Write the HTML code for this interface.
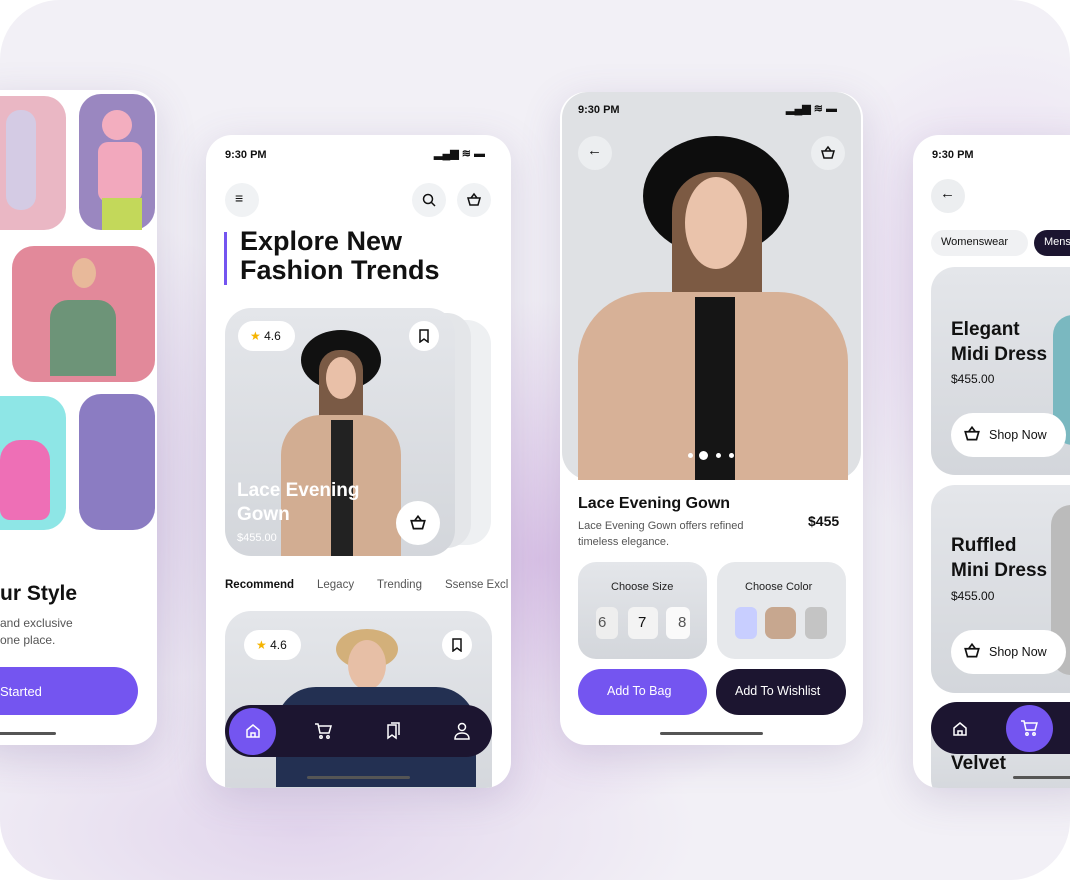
<!DOCTYPE html>
<html><head><meta charset="utf-8"><style>
*{margin:0;padding:0;box-sizing:border-box}
body{width:1070px;height:880px;background:#fff;font-family:"Liberation Sans",sans-serif;position:relative;overflow:hidden;color:#111}
.bg{position:absolute;left:0;top:0;width:1070px;height:880px;border-radius:60px;background:
radial-gradient(ellipse 300px 260px at 540px 560px,rgba(200,160,220,.55),transparent),
radial-gradient(ellipse 260px 300px at 60px 500px,rgba(190,160,215,.5),transparent),
radial-gradient(ellipse 220px 260px at 1000px 300px,rgba(220,190,235,.5),transparent),
radial-gradient(ellipse 400px 160px at 300px 830px,rgba(215,195,230,.6),transparent),
#f2f0f6;overflow:hidden}
.ph{position:absolute;background:#fff;border-radius:26px;overflow:hidden;box-shadow:0 10px 40px rgba(100,80,140,.18)}
.abs{position:absolute}
.t{position:absolute;white-space:nowrap}
.circ{position:absolute;width:34px;height:34px;border-radius:50%;background:#f0f2f4}
.gray{background:linear-gradient(180deg,#e4e6ea,#d3d6db)}
.dark{background:#1c1530}
.pur{background:#7455f0}
</style></head><body>
<div class="bg">
<!-- Phone A -->
<div class="ph" style="left:-30px;top:90px;width:187px;height:655px">
 <div class="abs" style="left:0;top:6px;width:96px;height:134px;border-radius:22px;background:#eab7c4"></div>
 <div class="abs" style="left:109px;top:4px;width:76px;height:136px;border-radius:22px;background:#9a87c0"></div>
 <div class="abs" style="left:132px;top:20px;width:30px;height:30px;border-radius:50%;background:#f3aebf"></div>
 <div class="abs" style="left:128px;top:52px;width:44px;height:60px;border-radius:10px;background:#f2a8bd"></div>
 <div class="abs" style="left:132px;top:108px;width:40px;height:32px;background:#c3d85a"></div>
 <div class="abs" style="left:36px;top:20px;width:30px;height:100px;border-radius:14px;background:#d4cbe4"></div>
 <div class="abs" style="left:42px;top:156px;width:143px;height:136px;border-radius:22px;background:#e2899a"></div>
 <div class="abs" style="left:80px;top:210px;width:66px;height:76px;border-radius:18px 18px 0 0;background:#6d9478"></div>
 <div class="abs" style="left:102px;top:168px;width:24px;height:30px;border-radius:50%;background:#e8b99a"></div>
 <div class="abs" style="left:0;top:306px;width:96px;height:134px;border-radius:22px;background:#8ee6e6"></div>
 <div class="abs" style="left:30px;top:350px;width:50px;height:80px;border-radius:20px 20px 10px 10px;background:#ee6fb6"></div>
 <div class="abs" style="left:109px;top:304px;width:76px;height:136px;border-radius:22px;background:#8b7cc2"></div>
 <div class="t" style="left:30px;top:492px;font-size:21px;font-weight:bold">ur Style</div>
 <div class="t" style="left:30px;top:525px;font-size:12px;color:#555;line-height:17px">and exclusive<br>one place.</div>
 <div class="abs pur" style="left:0;top:577px;width:168px;height:48px;border-radius:24px"></div>
 <div class="t" style="left:30px;top:594px;font-size:13px;color:#fff">Started</div>
 <div class="abs" style="left:20px;top:642px;width:66px;height:3px;background:#555;border-radius:2px"></div>
</div>
<!-- Phone B -->
<div class="ph" style="left:206px;top:135px;width:305px;height:653px">
 <div class="t" style="left:19px;top:14px;font-size:11px;font-weight:bold">9:30 PM</div>
 <div class="t" style="left:228px;top:12px;font-size:11px;font-weight:bold">▂▄▆ ≋ ▬</div>
 <div class="circ" style="left:19px;top:48px"></div><div class="t" style="left:29px;top:55px;font-size:14px">≡</div>
 <div class="circ" style="left:206px;top:48px"></div>
 <svg class="abs" style="left:215px;top:57px" width="16" height="16" viewBox="0 0 16 16" fill="none" stroke="#111" stroke-width="1.5"><circle cx="7" cy="7" r="4.5"/><path d="M10.5 10.5l3.5 3.5"/></svg>
 <div class="circ" style="left:251px;top:48px"></div>
 <svg class="abs" style="left:260px;top:57px" width="16" height="16" viewBox="0 0 16 16" fill="none" stroke="#111" stroke-width="1.5"><path d="M2 6h12l-2 7H4z M5 6l3-4 3 4"/></svg>
 <div class="abs" style="left:18px;top:97px;width:3px;height:53px;background:#7455f0"></div>
 <div class="t" style="left:34px;top:92px;font-size:27px;font-weight:bold;line-height:29px">Explore New<br>Fashion Trends</div>
 <div class="abs" style="left:150px;top:185px;width:135px;height:225px;border-radius:24px;background:#eef0f2"></div>
 <div class="abs" style="left:120px;top:178px;width:145px;height:235px;border-radius:24px;background:#e4e6e9"></div>
 <div class="abs gray" style="left:19px;top:173px;width:230px;height:248px;border-radius:26px"></div>
 <div class="abs" style="left:95px;top:195px;width:80px;height:60px;border-radius:50%;background:#111"></div>
 <div class="abs" style="left:113px;top:215px;width:44px;height:90px;border-radius:20px;background:#7a5a45"></div>
 <div class="abs" style="left:120px;top:222px;width:30px;height:42px;border-radius:50%;background:#e9c0a8"></div>
 <div class="abs" style="left:75px;top:280px;width:120px;height:141px;border-radius:40px 40px 0 0;background:#d2ad92"></div>
 <div class="abs" style="left:125px;top:285px;width:22px;height:136px;background:#222"></div>
 <div class="abs" style="left:32px;top:186px;width:57px;height:30px;border-radius:15px;background:#fff"></div>
 <div class="t" style="left:44px;top:194px;font-size:12px"><span style="color:#f5b400">★</span> 4.6</div>
 <div class="abs" style="left:203px;top:186px;width:30px;height:30px;border-radius:50%;background:#fff"></div>
 <svg class="abs" style="left:212px;top:194px" width="12" height="14" viewBox="0 0 12 14" fill="none" stroke="#111" stroke-width="1.5"><path d="M2 1h8v12l-4-3-4 3z"/></svg>
 <div class="t" style="left:31px;top:344px;font-size:19px;font-weight:bold;color:#fff;line-height:24px">Lace Evening<br>Gown</div>
 <div class="t" style="left:31px;top:397px;font-size:11px;color:#fff">$455.00</div>
 <div class="abs" style="left:190px;top:366px;width:44px;height:44px;border-radius:50%;background:#fff"></div>
 <svg class="abs" style="left:203px;top:379px" width="18" height="18" viewBox="0 0 16 16" fill="none" stroke="#111" stroke-width="1.5"><path d="M2 6h12l-2 7H4z M5 6l3-4 3 4"/></svg>
 <div class="t" style="left:19px;top:444px;font-size:11.5px;font-weight:bold">Recommend</div>
 <div class="t" style="left:111px;top:444px;font-size:11.5px;color:#555">Legacy</div>
 <div class="t" style="left:171px;top:444px;font-size:11.5px;color:#555">Trending</div>
 <div class="t" style="left:239px;top:444px;font-size:11.5px;color:#555">Ssense Excl</div>
 <div class="abs gray" style="left:19px;top:476px;width:267px;height:200px;border-radius:26px"></div>
 <div class="abs" style="left:130px;top:494px;width:62px;height:40px;border-radius:50%;background:#d3b07a"></div>
 <div class="abs" style="left:142px;top:505px;width:38px;height:50px;border-radius:50%;background:#e7bfa6"></div>
 <div class="abs" style="left:70px;top:552px;width:200px;height:100px;border-radius:40px 40px 0 0;background:#233052"></div>
 <div class="abs" style="left:38px;top:495px;width:57px;height:30px;border-radius:15px;background:#fff"></div>
 <div class="t" style="left:50px;top:503px;font-size:12px"><span style="color:#f5b400">★</span> 4.6</div>
 <div class="abs" style="left:236px;top:495px;width:30px;height:30px;border-radius:50%;background:#fff"></div>
 <svg class="abs" style="left:245px;top:503px" width="12" height="14" viewBox="0 0 12 14" fill="none" stroke="#111" stroke-width="1.5"><path d="M2 1h8v12l-4-3-4 3z"/></svg>
 <div class="abs dark" style="left:19px;top:570px;width:267px;height:52px;border-radius:26px"></div>
 <div class="abs pur" style="left:23px;top:573px;width:47px;height:47px;border-radius:50%"></div>
 <svg class="abs" style="left:39px;top:588px" width="16" height="16" viewBox="0 0 16 16" fill="none" stroke="#fff" stroke-width="1.5"><path d="M2 7l6-5 6 5v7H2z M6 14v-4h4v4"/></svg>
 <svg class="abs" style="left:108px;top:587px" width="18" height="18" viewBox="0 0 18 18" fill="none" stroke="#fff" stroke-width="1.5"><path d="M1 2h3l2 9h9l2-7H5"/><circle cx="7" cy="15" r="1.2"/><circle cx="14" cy="15" r="1.2"/></svg>
 <svg class="abs" style="left:179px;top:587px" width="16" height="18" viewBox="0 0 16 18" fill="none" stroke="#fff" stroke-width="1.5"><path d="M3 3h8v13l-4-3-4 3z M6 1h8v12"/></svg>
 <svg class="abs" style="left:248px;top:587px" width="16" height="18" viewBox="0 0 16 18" fill="none" stroke="#fff" stroke-width="1.5"><circle cx="8" cy="5" r="3.5"/><path d="M1 17c0-4 3-6 7-6s7 2 7 6z"/></svg>
 <div class="abs" style="left:101px;top:641px;width:103px;height:3px;background:#555;border-radius:2px"></div>
</div>
<!-- Phone C -->
<div class="ph" style="left:560px;top:92px;width:303px;height:653px">
 <div class="abs gray" style="left:2px;top:0;width:299px;height:388px;border-radius:26px 26px 28px 28px;background:#dfe1e4"></div>
 <div class="abs" style="left:83px;top:44px;width:146px;height:120px;border-radius:50%;background:#0d0d0d"></div>
 <div class="abs" style="left:112px;top:80px;width:90px;height:200px;border-radius:40px;background:#7c5a43"></div>
 <div class="abs" style="left:125px;top:85px;width:62px;height:92px;border-radius:50%;background:#eac3ab"></div>
 <div class="abs" style="left:18px;top:200px;width:270px;height:188px;border-radius:70px 70px 0 0;background:#d7b197"></div>
 <div class="abs" style="left:135px;top:205px;width:40px;height:183px;background:#151515"></div>
 <div class="t" style="left:18px;top:12px;font-size:11px;font-weight:bold">9:30 PM</div>
 <div class="t" style="left:226px;top:10px;font-size:11px;font-weight:bold">▂▄▆ ≋ ▬</div>
 <div class="circ" style="left:18px;top:44px;background:#eceef0"></div><div class="t" style="left:27px;top:50px;font-size:15px">←</div>
 <div class="circ" style="left:251px;top:44px;background:#eceef0"></div>
 <svg class="abs" style="left:260px;top:53px" width="16" height="16" viewBox="0 0 16 16" fill="none" stroke="#111" stroke-width="1.5"><path d="M2 6h12l-2 7H4z M5 6l3-4 3 4"/></svg>
 <div class="abs" style="left:128px;top:361px;width:5px;height:5px;border-radius:50%;background:#fff"></div>
 <div class="abs" style="left:139px;top:359px;width:9px;height:9px;border-radius:50%;background:#fff"></div>
 <div class="abs" style="left:156px;top:361px;width:5px;height:5px;border-radius:50%;background:#fff"></div>
 <div class="abs" style="left:169px;top:361px;width:5px;height:5px;border-radius:50%;background:#fff"></div>
 <div class="t" style="left:18px;top:403px;font-size:16px;font-weight:bold">Lace Evening Gown</div>
 <div class="t" style="left:18px;top:426px;font-size:11px;color:#555;line-height:16px">Lace Evening Gown offers refined<br>timeless elegance.</div>
 <div class="t" style="left:248px;top:421px;font-size:14px;font-weight:bold">$455</div>
 <div class="abs gray" style="left:18px;top:470px;width:129px;height:97px;border-radius:18px"></div>
 <div class="abs" style="left:157px;top:470px;width:129px;height:97px;border-radius:18px;background:#e6e8eb"></div>
 <div class="t" style="left:51px;top:489px;font-size:11px;color:#222">Choose Size</div>
 <div class="t" style="left:185px;top:489px;font-size:11px;color:#222">Choose Color</div>
 <div class="abs" style="left:36px;top:515px;width:22px;height:32px;border-radius:6px;background:#eee"></div><div class="t" style="left:38px;top:522px;font-size:15px;color:#555">6</div>
 <div class="abs" style="left:68px;top:515px;width:30px;height:32px;border-radius:6px;background:#f3f3f3"></div><div class="t" style="left:78px;top:522px;font-size:15px">7</div>
 <div class="abs" style="left:106px;top:515px;width:24px;height:32px;border-radius:6px;background:#fafafa"></div><div class="t" style="left:118px;top:522px;font-size:15px;color:#555">8</div>
 <div class="abs" style="left:175px;top:515px;width:22px;height:32px;border-radius:6px;background:#c8ceff"></div>
 <div class="abs" style="left:205px;top:515px;width:31px;height:32px;border-radius:8px;background:#c7a78f"></div>
 <div class="abs" style="left:245px;top:515px;width:22px;height:32px;border-radius:6px;background:#c4c4c4"></div>
 <div class="abs pur" style="left:18px;top:577px;width:129px;height:46px;border-radius:23px"></div>
 <div class="t" style="left:47px;top:592px;font-size:12.5px;color:#fff">Add To Bag</div>
 <div class="abs dark" style="left:156px;top:577px;width:130px;height:46px;border-radius:23px"></div>
 <div class="t" style="left:175px;top:592px;font-size:12.5px;color:#fff">Add To Wishlist</div>
 <div class="abs" style="left:100px;top:640px;width:103px;height:3px;background:#555;border-radius:2px"></div>
</div>
<!-- Phone D -->
<div class="ph" style="left:913px;top:135px;width:190px;height:653px">
 <div class="t" style="left:19px;top:14px;font-size:11px;font-weight:bold">9:30 PM</div>
 <div class="circ" style="left:18px;top:44px;background:#eceef0"></div><div class="t" style="left:27px;top:50px;font-size:15px">←</div>
 <div class="abs" style="left:18px;top:95px;width:97px;height:26px;border-radius:13px;background:#f0f1f3"></div>
 <div class="t" style="left:28px;top:101px;font-size:11px">Womenswear</div>
 <div class="abs dark" style="left:121px;top:95px;width:80px;height:26px;border-radius:13px"></div>
 <div class="t" style="left:131px;top:101px;font-size:11px;color:#fff">Mens</div>
 <div class="abs gray" style="left:18px;top:132px;width:170px;height:208px;border-radius:24px"></div>
 <div class="abs" style="left:140px;top:180px;width:40px;height:130px;border-radius:20px;background:#7ab8c0"></div>
 <div class="t" style="left:38px;top:182px;font-size:19px;font-weight:bold;line-height:25px">Elegant<br>Midi Dress</div>
 <div class="t" style="left:38px;top:237px;font-size:12px">$455.00</div>
 <div class="abs" style="left:38px;top:278px;width:115px;height:44px;border-radius:22px;background:#fff"></div>
 <svg class="abs" style="left:50px;top:290px" width="18" height="18" viewBox="0 0 16 16" fill="none" stroke="#111" stroke-width="1.5"><path d="M2 6h12l-2 7H4z M5 6l3-4 3 4"/></svg>
 <div class="t" style="left:76px;top:293px;font-size:12.5px">Shop Now</div>
 <div class="abs gray" style="left:18px;top:350px;width:170px;height:208px;border-radius:24px"></div>
 <div class="abs" style="left:138px;top:370px;width:40px;height:170px;border-radius:20px;background:#bbb"></div>
 <div class="t" style="left:38px;top:398px;font-size:19px;font-weight:bold;line-height:25px">Ruffled<br>Mini Dress</div>
 <div class="t" style="left:38px;top:454px;font-size:12px">$455.00</div>
 <div class="abs" style="left:38px;top:495px;width:115px;height:44px;border-radius:22px;background:#fff"></div>
 <svg class="abs" style="left:50px;top:507px" width="18" height="18" viewBox="0 0 16 16" fill="none" stroke="#111" stroke-width="1.5"><path d="M2 6h12l-2 7H4z M5 6l3-4 3 4"/></svg>
 <div class="t" style="left:76px;top:510px;font-size:12.5px">Shop Now</div>
 <div class="abs gray" style="left:18px;top:568px;width:170px;height:100px;border-radius:24px"></div>
 <div class="abs dark" style="left:18px;top:567px;width:170px;height:52px;border-radius:26px"></div>
 <div class="abs pur" style="left:93px;top:570px;width:47px;height:47px;border-radius:50%"></div>
 <svg class="abs" style="left:39px;top:586px" width="16" height="16" viewBox="0 0 16 16" fill="none" stroke="#fff" stroke-width="1.5"><path d="M2 7l6-5 6 5v7H2z M6 14v-4h4v4"/></svg>
 <svg class="abs" style="left:107px;top:584px" width="18" height="18" viewBox="0 0 18 18" fill="none" stroke="#fff" stroke-width="1.5"><path d="M1 2h3l2 9h9l2-7H5"/><circle cx="7" cy="15" r="1.2"/><circle cx="14" cy="15" r="1.2"/></svg>
 <div class="t" style="left:38px;top:618px;font-size:19px;font-weight:bold">Velvet</div>
 <div class="abs" style="left:100px;top:641px;width:103px;height:3px;background:#555;border-radius:2px"></div>
</div>
</div>
</body></html>
